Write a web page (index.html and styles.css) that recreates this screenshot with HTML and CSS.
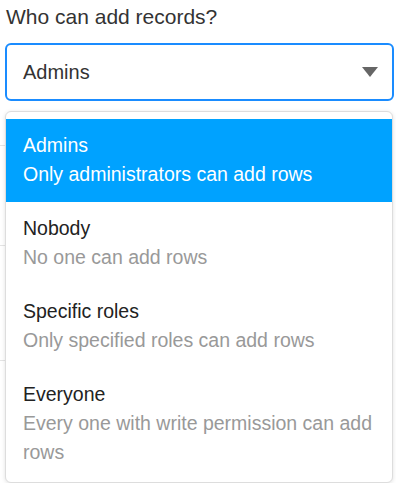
FILE: index.html
```html
<!DOCTYPE html>
<html lang="en">
<head>
    <meta charset="UTF-8">
    <title>Who can add records?</title>
    <link rel="stylesheet" href="styles.css">
</head>
<body>
    <div class="page-rules">
        <span class="rule r1"></span>
        <span class="rule r2"></span>
        <span class="rule r3"></span>
    </div>

    <div class="field">
        <label class="field-label">Who can add records?</label>
        <div class="select">
            <span class="select-value">Admins</span>
            <span class="select-caret"></span>
        </div>

        <!-- Options popup -->
        <ul class="options">
            <li class="option active">
                <div class="option-title">Admins</div>
                <div class="option-desc">Only administrators can add rows</div>
            </li>
            <li class="option">
                <div class="option-title">Nobody</div>
                <div class="option-desc">No one can add rows</div>
            </li>
            <li class="option">
                <div class="option-title">Specific roles</div>
                <div class="option-desc">Only specified roles can add rows</div>
            </li>
            <li class="option">
                <div class="option-title">Everyone</div>
                <div class="option-desc">Every one with write permission can add rows</div>
            </li>
        </ul>
    </div>
</body>
</html>
```

FILE: styles.css
```css
body {
    font-family: 'Liberation Sans', Arial, sans-serif;
    background-color: #ffffff;
    color: #333333;
    margin: 0;
    padding: 0 2px 0 5px;
}

/* faint separators of the form behind the popup */
.page-rules {
    position: absolute;
    left: 0;
    top: 0;
    width: 6px;
}

.rule {
    position: absolute;
    left: 0;
    width: 6px;
    height: 1px;
    background-color: #e4e4e4;
}

.r1 { top: 145px; }
.r2 { top: 245px; }
.r3 { top: 360px; }

.field-label {
    display: block;
    font-size: 21px;
    line-height: 24px;
    padding: 5px 0 0 1px;
    color: #333333;
}

.select {
    display: flex;
    align-items: center;
    justify-content: space-between;
    height: 54px;
    margin-top: 14px;
    padding: 0 14px 0 16px;
    border: 2px solid #1a8cff;
    border-radius: 6px;
    font-size: 20px;
    color: #333333;
}

.select-caret {
    width: 0;
    height: 0;
    border-left: 8px solid transparent;
    border-right: 8px solid transparent;
    border-top: 10px solid #666666;
}

.options {
    list-style: none;
    margin: 10px 1px 0 0;
    padding: 7px 0 2px;
    border: 1px solid #dddddd;
    border-radius: 6px;
    box-shadow: 0 1px 4px rgba(0, 0, 0, 0.12);
    background-color: #ffffff;
    position: relative;
}

.option {
    padding: 12px 17px 13px;
    font-size: 19.5px;
    line-height: 29px;
}

.option-title {
    color: #222222;
}

.option-desc {
    color: #999999;
}

.option.active {
    background-color: #00a2ff;
}

.option.active .option-title,
.option.active .option-desc {
    color: #ffffff;
}
```
